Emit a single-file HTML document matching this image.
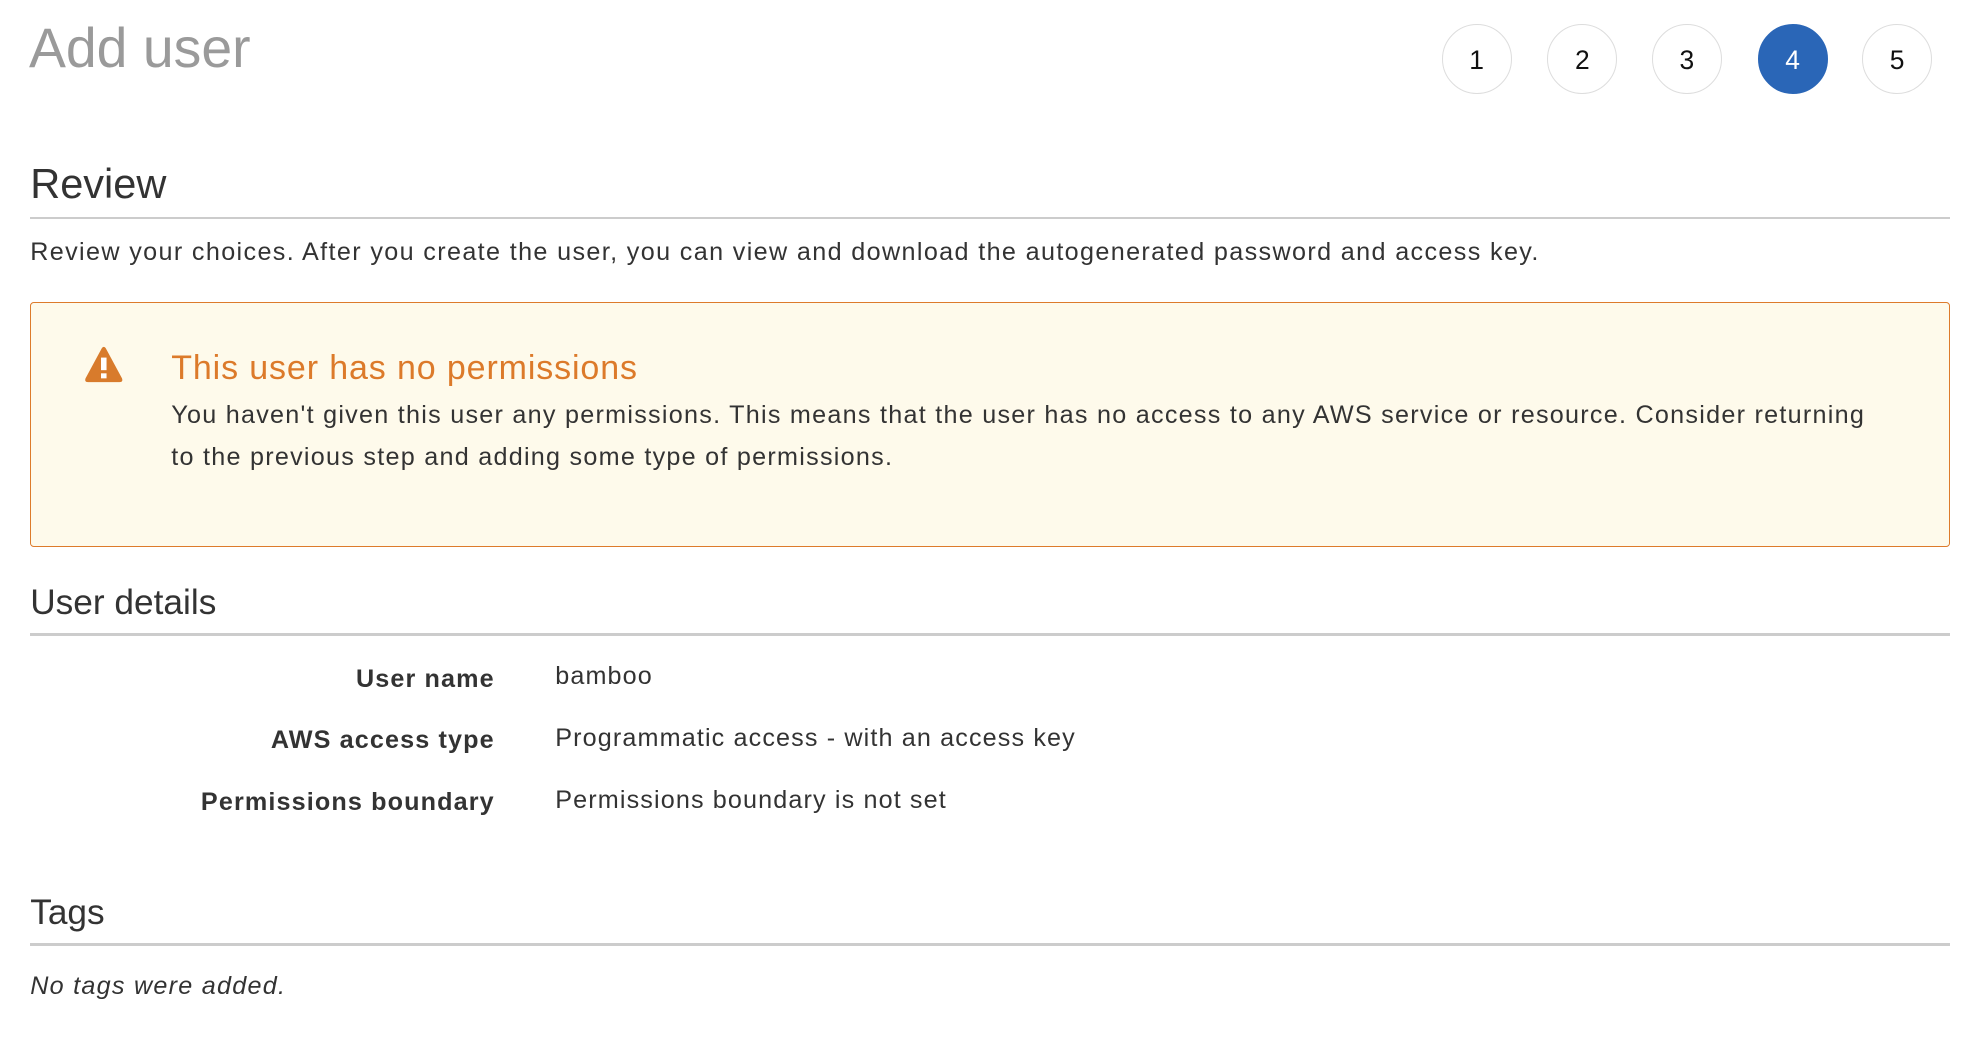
<!DOCTYPE html>
<html><head><meta charset="utf-8"><style>
html,body{margin:0;padding:0;background:#fff;}
body{width:1568px;height:830px;zoom:1.259;position:relative;overflow:hidden;font-family:"Liberation Sans",Arial,sans-serif;color:#333;}
.a{position:absolute;white-space:nowrap;}
.c{position:absolute;top:19px;width:54px;height:54px;border:1px solid #ddd;border-radius:50%;font-size:21px;line-height:56px;text-align:center;color:#111;}
.line{position:absolute;left:24px;width:1525px;height:2px;background:#ccc;}
.lab{position:absolute;right:1175px;font-weight:bold;font-size:20px;color:#333;letter-spacing:0.9px;}
.val{position:absolute;left:441px;font-size:20px;color:#333;letter-spacing:0.9px;}
</style></head><body>
<div class="a" style="left:23px;top:13px;font-size:44px;color:#9a9a9a;">Add user</div>
<div class="c" style="left:1145px">1</div>
<div class="c" style="left:1229px">2</div>
<div class="c" style="left:1312px">3</div>
<div class="c" style="left:1396px;background:#2a66b7;border-color:#2a66b7;color:#fff">4</div>
<div class="c" style="left:1479px">5</div>

<div class="a" style="left:24px;top:127px;font-size:33px;color:#333;">Review</div>
<div class="line" style="top:172px"></div>
<div class="a" style="left:24px;top:189px;font-size:20px;letter-spacing:1.08px;">Review your choices. After you create the user, you can view and download the autogenerated password and access key.</div>

<div class="a" style="left:24px;top:240px;width:1523px;height:193px;border:1px solid #dd7b2b;border-radius:3px;background:#fefaeb;"></div>
<svg class="a" style="left:66px;top:274px" width="33" height="31" viewBox="0 0 33 31"><path d="M16.5 1.5 Q17.5 1.5 18.3 3 L31 26.5 Q32 29.5 29 29.5 L4 29.5 Q1 29.5 2 26.5 L14.7 3 Q15.5 1.5 16.5 1.5Z" fill="#d87b2c"/><rect x="14.3" y="10" width="4.4" height="10" fill="#fff"/><rect x="14.3" y="22.5" width="4.4" height="4" fill="#fff"/></svg>
<div class="a" style="left:136px;top:277px;font-size:27px;color:#dc7a2a;letter-spacing:0.7px;">This user has no permissions</div>
<div class="a" style="left:136px;top:314px;font-size:20px;line-height:33px;letter-spacing:1px;">You haven't given this user any permissions. This means that the user has no access to any AWS service or resource. Consider returning<br>to the previous step and adding some type of permissions.</div>

<div class="a" style="left:24px;top:463px;font-size:28px;">User details</div>
<div class="line" style="top:503px"></div>
<div class="lab" style="top:528px">User name</div><div class="val" style="top:526px">bamboo</div>
<div class="lab" style="top:577px">AWS access type</div><div class="val" style="top:575px">Programmatic access - with an access key</div>
<div class="lab" style="top:626px">Permissions boundary</div><div class="val" style="top:624px">Permissions boundary is not set</div>

<div class="a" style="left:24px;top:709px;font-size:28px;">Tags</div>
<div class="line" style="top:749px"></div>
<div class="a" style="left:24px;top:772px;font-size:20px;font-style:italic;letter-spacing:1px;">No tags were added.</div>
</body></html>
